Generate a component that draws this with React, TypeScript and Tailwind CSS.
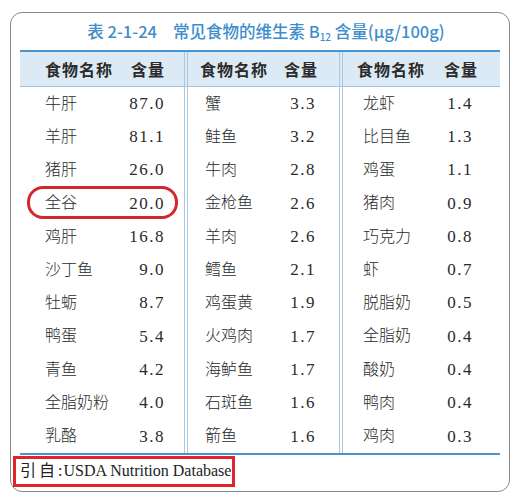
import React from "react";

const col1: [string, string][] = [
  ["牛肝", "87.0"], ["羊肝", "81.1"], ["猪肝", "26.0"], ["全谷", "20.0"], ["鸡肝", "16.8"],
  ["沙丁鱼", "9.0"], ["牡蛎", "8.7"], ["鸭蛋", "5.4"], ["青鱼", "4.2"], ["全脂奶粉", "4.0"], ["乳酪", "3.8"],
];
const col2: [string, string][] = [
  ["蟹", "3.3"], ["鲑鱼", "3.2"], ["牛肉", "2.8"], ["金枪鱼", "2.6"], ["羊肉", "2.6"],
  ["鳕鱼", "2.1"], ["鸡蛋黄", "1.9"], ["火鸡肉", "1.7"], ["海鲈鱼", "1.7"], ["石斑鱼", "1.6"], ["箭鱼", "1.6"],
];
const col3: [string, string][] = [
  ["龙虾", "1.4"], ["比目鱼", "1.3"], ["鸡蛋", "1.1"], ["猪肉", "0.9"], ["巧克力", "0.8"],
  ["虾", "0.7"], ["脱脂奶", "0.5"], ["全脂奶", "0.4"], ["酸奶", "0.4"], ["鸭肉", "0.4"], ["鸡肉", "0.3"],
];

const cjk = { fontFamily: '"Liberation Serif", "Noto Sans CJK SC", serif' };
const num = { fontFamily: '"Liberation Serif", serif' };

function Sep() {
  return <div className="w-[4px] shrink-0 self-stretch border-x border-[#a9c9e2]" />;
}

function Header({ w, pl, pr }: { w: string; pl: string; pr: string }) {
  return (
    <div className={`${w} ${pl} ${pr} flex items-center justify-between shrink-0`}>
      <span className="text-[16px] font-semibold text-[#2b2b2b] tracking-[1px]" style={{ fontFamily: '"Noto Sans CJK SC", sans-serif' }}>食物名称</span>
      <span className="text-[16px] font-semibold text-[#2b2b2b] tracking-[1px]" style={{ fontFamily: '"Noto Sans CJK SC", sans-serif' }}>含量</span>
    </div>
  );
}

function Col({ w, pl, pr, data, mark }: { w: string; pl: string; pr: string; data: [string, string][]; mark?: boolean }) {
  return (
    <div className={`${w} shrink-0 flex flex-col`}>
      {data.map(([n, v], i) => (
        <div key={i} className={`relative h-[33.27px] ${pl} ${pr} flex items-center justify-between text-[#2a2a2a]`}>
          <span className="text-[16px] font-light" style={cjk}>{n}</span>
          <span className="text-[17px] tracking-[1.5px]" style={num}>{v}</span>
          {mark && i === 3 && (
            <div className="absolute left-[7px] right-[6px] top-[-1px] bottom-[1px] rounded-[16px] border-[3px] border-[#d4262e]" />
          )}
        </div>
      ))}
    </div>
  );
}

export default function App() {
  return (
    <div className="w-[518px] h-[500px] bg-white pt-[12px] pl-[10px]">
      <div className="w-[500px] h-[480px] rounded-[12px] border border-[#8a8a8a] flex flex-col">
        <div className="h-[37px] flex items-center justify-center pl-[12px] text-[16.5px] text-[#3f8ecb] font-medium whitespace-nowrap" style={{ fontFamily: '"Noto Sans CJK SC", sans-serif' }}>
          <span className="mr-[16px]">表 2-1-24</span>
          <span>常见食物的维生素 B<sub className="text-[10px]">12</sub> 含量(μg/100g)</span>
        </div>
        <div className="ml-[9px] w-[480px] border-t-2 border-b-2 border-[#4a93cc]">
          <div className="flex h-[35px] bg-[#dceaf5] border-b border-[#9ec5e3]">
            <Header w="w-[164px]" pl="pl-[25px]" pr="pr-[19px]" />
            <Sep />
            <Header w="w-[151px]" pl="pl-[12px]" pr="pr-[21px]" />
            <Sep />
            <Header w="w-[157px]" pl="pl-[14px]" pr="pr-[22px]" />
          </div>
          <div className="flex">
            <Col w="w-[164px]" pl="pl-[25px]" pr="pr-[19px]" data={col1} mark />
            <Sep />
            <Col w="w-[151px]" pl="pl-[17px]" pr="pr-[23px]" data={col2} />
            <Sep />
            <Col w="w-[157px]" pl="pl-[20px]" pr="pr-[27px]" data={col3} />
          </div>
        </div>
        <div className="ml-[2px] mt-[1px] w-[222px] h-[31px] border-[3px] border-[#e1232b] flex items-center pl-[4px] text-[16px] text-[#222] whitespace-nowrap overflow-visible" style={cjk}>
          <span className="tracking-[3px] shrink-0">引自</span>
          <span className="mr-[1px] shrink-0">:</span>
          <span className="shrink-0">USDA Nutrition Database</span>
        </div>
      </div>
    </div>
  );
}
